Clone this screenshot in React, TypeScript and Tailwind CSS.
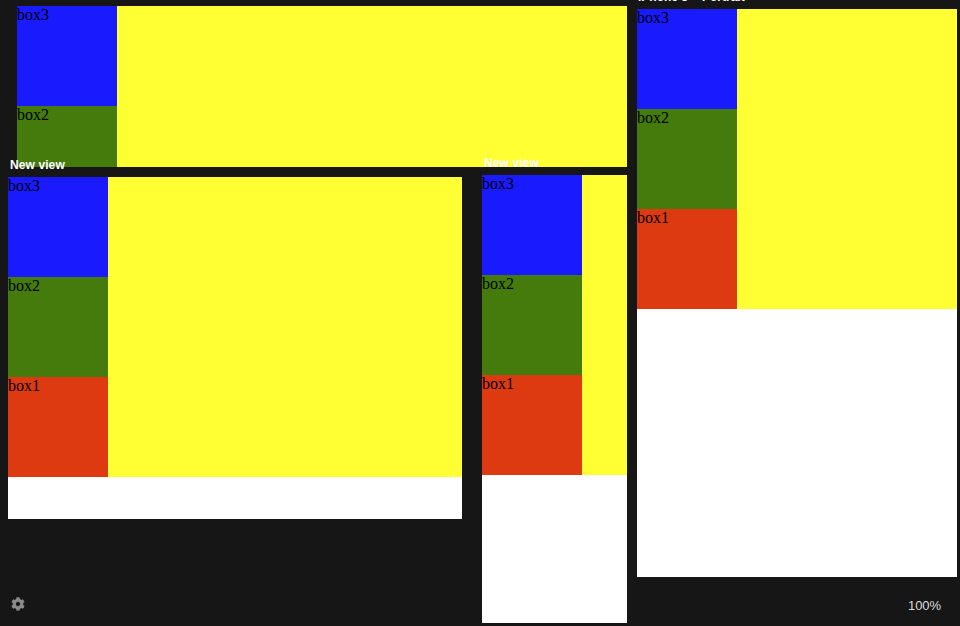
import { FaCog } from "react-icons/fa";

function Frame({ className }: { className: string }) {
  return (
    <div className={`absolute overflow-hidden bg-white font-['Liberation_Serif',serif] text-base leading-[18px] text-black ${className}`}>
      <div className="flex h-[300px] w-full bg-[#ffff33]">
        <div className="flex w-[100px] shrink-0 flex-col">
          <div className="h-[100px] bg-[#1a1aff]">box3</div>
          <div className="h-[100px] bg-[#457a0c]">box2</div>
          <div className="h-[100px] bg-[#dd3a12]">box1</div>
        </div>
      </div>
    </div>
  );
}

function Label({ className, children }: { className: string; children: React.ReactNode }) {
  return (
    <div className={`absolute whitespace-pre font-['Liberation_Sans',sans-serif] text-xs leading-[14px] font-bold text-white ${className}`}>
      {children}
    </div>
  );
}

export default function App() {
  return (
    <div className="relative h-[626px] w-[960px] overflow-hidden bg-[#161616]">
      <Frame className="top-[6px] left-[17px] h-[161px] w-[610px]" />
      <Frame className="top-[177px] left-[8px] h-[342px] w-[454px]" />
      <Frame className="top-[175px] left-[482px] h-[448px] w-[145px]" />
      <Frame className="top-[9px] left-[637px] h-[568px] w-[320px]" />
      <Label className="top-[158px] left-[10px] tracking-[0.1px]">New view</Label>
      <Label className="top-[156px] left-[484px] tracking-[0.1px]">New view</Label>
      <Label className="top-[-10px] left-[638px]">{"iPhone 5 -  Portrait"}</Label>
      <FaCog className="absolute top-[597px] left-[11px] text-[14px] text-[#8a8a8a]" />
      <div className="absolute top-[598px] left-[908px] font-['Liberation_Sans',sans-serif] text-[13px] leading-[15px] tracking-[-0.1px] text-[#dddddd]">100%</div>
    </div>
  );
}
